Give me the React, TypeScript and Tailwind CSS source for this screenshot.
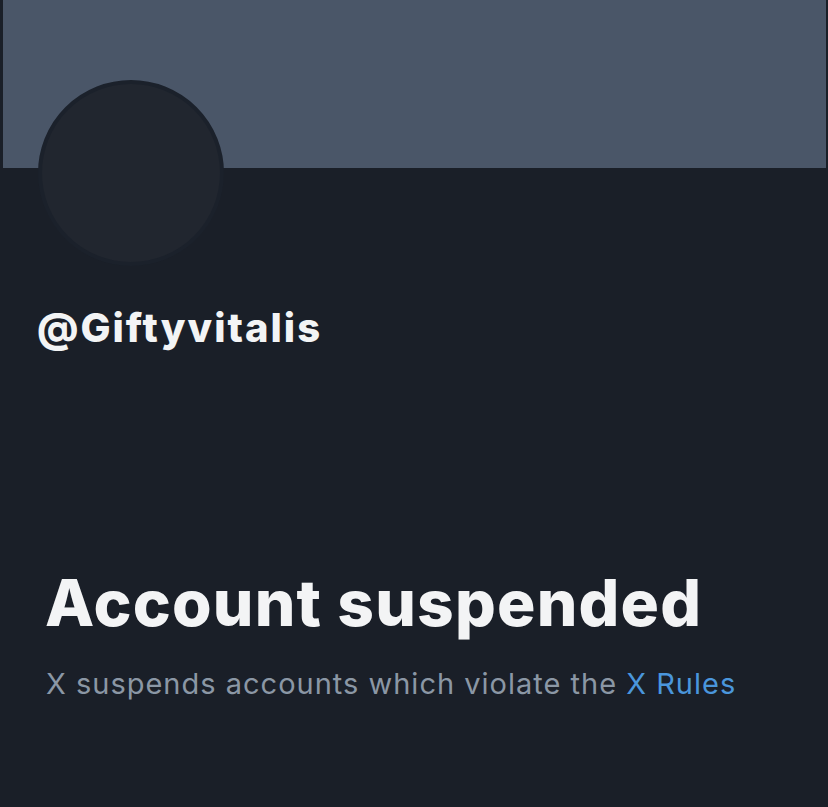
import React from "react";

export default function App() {
  return (
    <div className="w-[828px] h-[807px] bg-[#1a1f28] overflow-hidden flex flex-col" style={{ fontFamily: 'Inter, "Noto Sans", sans-serif' }}>
      <div className="h-[168px] ml-[3px] mr-[2px] bg-[#4a5668] shrink-0" />
      <div className="ml-[38px] -mt-[88px] w-[186px] h-[186px] rounded-full bg-[#21262f] border-[4px] border-[#1b212b] shrink-0" />
      <div className="ml-[37px] mt-[38px] text-[40px] leading-[48px] font-extrabold text-[#f3f4f5] tracking-[2px]">@Giftyvitalis</div>
      <div className="ml-[45px] mt-[211px] text-[64px] leading-[80px] font-extrabold text-[#f3f4f5] tracking-[1.2px]">Account suspended</div>
      <div className="ml-[46px] mt-[21px] text-[29px] leading-[40px] text-[#8b97a5] tracking-[1px]">
        X suspends accounts which violate the <span className="text-[#4a96dc]">X Rules</span>
      </div>
    </div>
  );
}
